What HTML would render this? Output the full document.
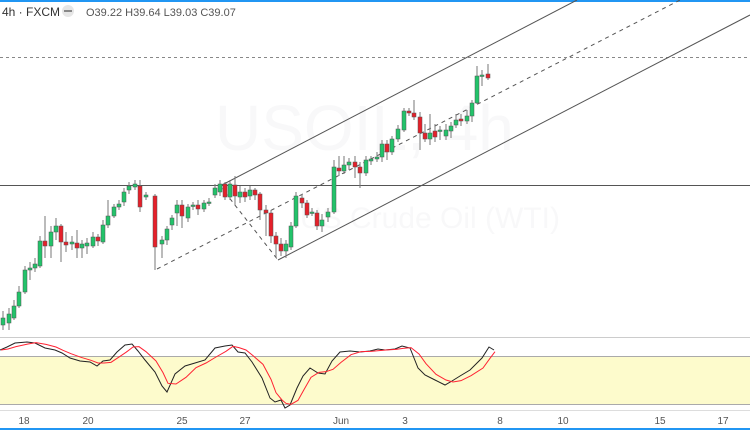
<!DOCTYPE html>
<html><head><meta charset="utf-8"><style>
html,body{margin:0;padding:0;width:750px;height:430px;overflow:hidden;background:#fff;font-family:"Liberation Sans",sans-serif}
svg{position:absolute;left:0;top:0}
</style></head><body>
<svg id="s" width="750" height="430" xmlns="http://www.w3.org/2000/svg">
<rect x="0" y="0" width="750" height="2" fill="#2196f3"/>
<rect x="0" y="428" width="750" height="2" fill="#2196f3"/>
<text x="215" y="150" font-size="64" fill="#f8f8f9" font-family="Liberation Sans">USOIL, 4h</text>
<text x="300" y="228" font-size="30" fill="#f8f8f9" font-family="Liberation Sans">US Crude Oil (WTI)</text>
<line x1="0" y1="57.5" x2="750" y2="57.5" stroke="#888" stroke-dasharray="3,3"/>
<line x1="0" y1="185.5" x2="750" y2="185.5" stroke="#555" stroke-width="1"/>
<line x1="220" y1="186" x2="577" y2="0" stroke="#555"/>
<line x1="278" y1="260" x2="750" y2="15" stroke="#555"/>
<line x1="157" y1="269" x2="680" y2="0" stroke="#555" stroke-dasharray="4,4"/>
<line x1="220" y1="186" x2="278" y2="260" stroke="#555" stroke-dasharray="4,4"/>
<g id="c"></g>
<line x1="0" y1="337.5" x2="750" y2="337.5" stroke="#ccc"/>
<rect x="0" y="356" width="750" height="48" fill="#fdfbcc"/>
<line x1="0" y1="356.5" x2="750" y2="356.5" stroke="#aaa"/>
<line x1="0" y1="404.5" x2="750" y2="404.5" stroke="#aaa"/>
<line x1="0" y1="410.5" x2="750" y2="410.5" stroke="#ddd"/>
<polyline id="k" fill="none" stroke="#222" stroke-width="1"/>
<polyline id="d" fill="none" stroke="#f23" stroke-width="1"/>
<g font-size="10" fill="#555" text-anchor="middle">
<text x="24" y="424">18</text><text x="88" y="424">20</text><text x="182" y="424">25</text><text x="245" y="424">27</text><text x="341" y="424">Jun</text><text x="405" y="424">3</text><text x="500" y="424">8</text><text x="563" y="424">10</text><text x="660" y="424">15</text><text x="723" y="424">17</text>
</g>
<g font-size="12" fill="#333"><text x="2" y="16">4h · FXCM</text></g>
<circle cx="68" cy="11" r="6" fill="#e6e6e6"/><rect x="64" y="10" width="8" height="2" fill="#888"/>
<g font-size="11" fill="#555"><text x="86" y="16">O39.22  H39.64  L39.03  C39.07</text></g>
</svg>
<script>
var C=[[3,325,318,311,330],[9,323,314,308,330],[14,318,306,300,320],[19,306,292,286,308],[25,292,270,266,294],[30,270,268,262,280],[35,268,264,258,272],[40,266,241,236,268],[45,241,246,216,258],[51,246,232,226,258],[56,232,226,218,240],[61,226,242,224,262],[66,242,245,232,252],[72,244,242,236,250],[77,243,248,230,258],[82,248,244,240,258],[87,246,243,238,254],[93,246,237,232,248],[98,237,241,234,246],[103,242,225,220,244],[108,225,216,200,228],[114,216,207,204,218],[119,207,204,200,210],[124,202,192,188,206],[129,190,186,182,194],[135,187,184,180,190],[140,186,207,180,212],[146,197,195,192,200],[155,196,247,194,270],[162,244,240,236,258],[167,240,229,226,245],[172,225,218,215,230],[177,213,205,200,226],[182,205,216,200,228],[188,218,207,204,222],[193,206,205,202,210],[198,205,209,200,215],[204,209,203,200,212],[209,203,202,198,206],[215,195,188,184,198],[220,192,184,180,196],[225,184,197,182,200],[230,197,184,180,200],[235,185,196,176,205],[240,197,192,186,203],[245,192,197,188,202],[250,196,190,186,200],[255,190,195,188,200],[260,194,210,192,220],[266,210,213,205,236],[271,213,236,210,243],[276,236,244,232,258],[281,244,251,238,256],[286,251,244,240,258],[291,247,226,222,250],[296,226,196,192,228],[302,198,203,194,208],[307,203,215,200,218],[312,213,212,208,216],[317,213,226,210,230],[322,226,220,214,232],[328,217,212,208,222],[334,212,167,160,214],[339,168,171,156,176],[344,171,165,156,174],[349,165,162,158,170],[355,162,167,156,178],[360,167,173,162,188],[366,173,160,156,176],[371,161,159,156,165],[377,159,157,152,162],[382,157,144,140,162],[387,144,152,140,160],[392,152,139,136,155],[398,139,129,125,142],[404,130,111,108,132],[409,111,113,108,116],[414,113,117,100,120],[420,117,133,112,150],[425,133,139,124,142],[430,139,133,114,145],[435,131,137,124,142],[440,131,130,126,140],[446,136,130,124,140],[451,131,126,122,138],[456,125,120,114,128],[461,119,121,114,126],[467,121,116,110,124],[472,116,103,100,122],[477,103,76,66,104],[482,76,75,70,86],[488,74,78,64,80]];
var g='';C.forEach(function(c){var x=c[0],o=c[1],cl=c[2],up=cl<=o,col=up?'#22c36a':'#e5202a';var t=Math.min(o,cl),h=Math.max(1.5,Math.abs(o-cl));
g+='<line x1="'+x+'" y1="'+c[3]+'" x2="'+x+'" y2="'+c[4]+'" stroke="#777"/><rect x="'+(x-2)+'" y="'+t+'" width="4" height="'+h+'" fill="'+col+'" stroke="#555" stroke-width="0.5"/>';});
document.getElementById('c').innerHTML=g;
var K=[[0,350],[7,347],[15,343],[27,342],[35,343],[45,348],[55,350],[62,353],[70,358],[80,361],[90,362],[97,366],[103,361],[110,360],[117,352],[125,345],[132,344],[138,351],[145,360],[155,372],[162,386],[167,392],[175,374],[185,366],[195,363],[205,360],[215,348],[225,346],[232,345],[238,352],[245,353],[252,362],[262,378],[270,398],[275,402],[281,400],[285,408],[290,405],[297,388],[303,376],[310,368],[318,373],[325,374],[332,361],[340,352],[350,351],[360,352],[370,351],[378,349],[385,350],[395,349],[402,346],[410,348],[418,368],[425,375],[435,380],[445,385],[452,381],[460,376],[470,370],[482,358],[489,347],[494,350]];
document.getElementById('k').setAttribute('points',K.map(function(p){return p.join(',')}).join(' '));
var D=[];for(var i=0;i<K.length;i++){var a=K[Math.max(0,i-1)],b=K[i],c=K[Math.max(0,i-2)];D.push([b[0]+1,(a[1]+b[1]+c[1])/3]);}
document.getElementById('d').setAttribute('points',D.map(function(p){return p.join(',')}).join(' '));
</script>
</body></html>
